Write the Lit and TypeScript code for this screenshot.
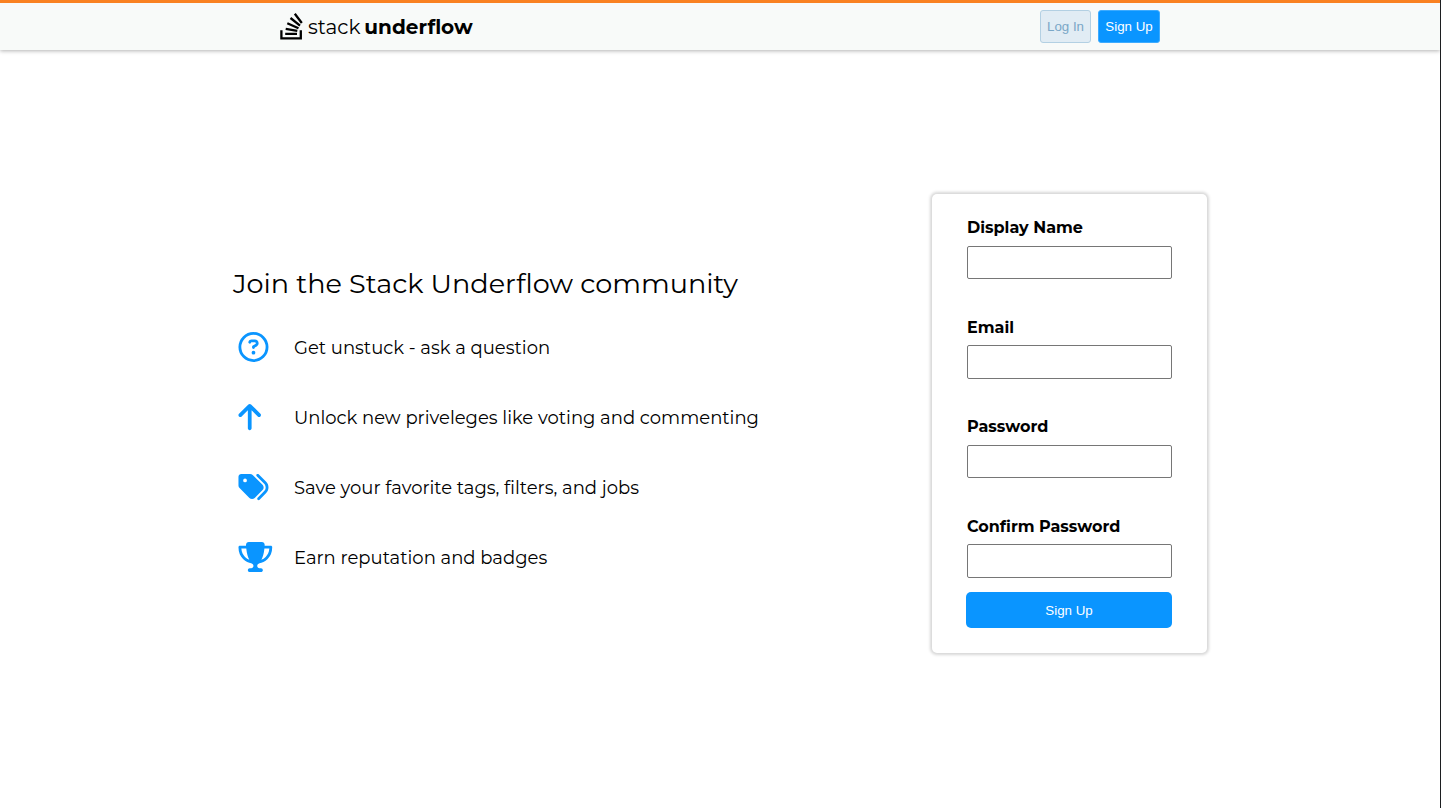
import { LitElement, html, css, svg } from "lit";
import { customElement } from "lit/decorators.js";

const BENEFITS = [
  {
    text: "Get unstuck - ask a question",
    w: 512,
    path: "M464 256A208 208 0 1 0 48 256a208 208 0 1 0 416 0zM0 256a256 256 0 1 1 512 0A256 256 0 1 1 0 256zm169.8-90.7c7.9-22.3 29.1-37.3 52.8-37.3h58.3c34.9 0 63.1 28.3 63.1 63.1c0 22.6-12.1 43.5-31.7 54.8L280 264.4c-.2 13-10.9 23.6-24 23.6c-13.3 0-24-10.7-24-24V250.5c0-8.6 4.6-16.5 12.1-20.8l44.3-25.4c4.7-2.7 7.6-7.7 7.6-13.1c0-8.4-6.8-15.1-15.1-15.1H222.6c-3.4 0-6.4 2.1-7.5 5.3l-.4 1.2c-4.4 12.5-18.2 19-30.6 14.6s-19-18.2-14.6-30.6l.4-1.2zM224 352a32 32 0 1 1 64 0 32 32 0 1 1 -64 0z",
  },
  {
    text: "Unlock new priveleges like voting and commenting",
    w: 384,
    path: "M214.6 41.4c-12.5-12.5-32.8-12.5-45.3 0l-160 160c-12.5 12.5-12.5 32.8 0 45.3s32.8 12.5 45.3 0L160 141.2V448c0 17.7 14.3 32 32 32s32-14.3 32-32V141.2L329.4 246.6c12.5 12.5 32.8 12.5 45.3 0s12.5-32.8 0-45.3l-160-160z",
  },
  {
    text: "Save your favorite tags, filters, and jobs",
    w: 512,
    path: "M345 39.1L472.8 168.4c52.4 53 52.4 138.2 0 191.2L360.8 472.9c-9.3 9.4-24.5 9.5-33.9 .2s-9.5-24.5-.2-33.9L438.6 325.9c33.9-34.3 33.9-89.4 0-123.7L310.9 72.9c-9.3-9.4-9.2-24.6 .2-33.9s24.6-9.2 33.9 .2zM0 229.5V80C0 53.5 21.5 32 48 32H197.5c17 0 33.3 6.7 45.3 18.7l168 168c25 25 25 65.5 0 90.5L277.3 442.7c-25 25-65.5 25-90.5 0l-168-168C6.7 262.7 0 246.5 0 229.5zM144 144a32 32 0 1 0 -64 0 32 32 0 1 0 64 0z",
  },
  {
    text: "Earn reputation and badges",
    w: 576,
    path: "M400 0H176c-26.5 0-48.1 21.8-47.1 48.2c.2 5.3 .4 10.6 .7 15.8H24C10.7 64 0 74.7 0 88c0 92.6 33.5 157 78.5 200.7c44.3 43.1 98.3 64.8 138.1 75.8c23.4 6.5 39.4 26 39.4 45.6c0 20.9-17 37.9-37.9 37.9H192c-17.7 0-32 14.3-32 32s14.3 32 32 32H384c17.7 0 32-14.3 32-32s-14.3-32-32-32H357.9C337 448 320 431 320 410.1c0-19.6 15.9-39.2 39.4-45.6c39.9-11 93.9-32.7 138.2-75.8C542.5 245 576 180.6 576 88c0-13.3-10.7-24-24-24H446.4c.3-5.2 .5-10.4 .7-15.8C448.1 21.8 426.5 0 400 0zM48.9 112h84.4c9.1 90.1 29.2 150.3 51.9 190.6c-24.9-11-50.8-26.5-73.2-48.3c-32-31.1-58-76-63-142.3zM464.1 254.3c-22.4 21.8-48.3 37.3-73.2 48.3c22.7-40.3 42.8-100.5 51.9-190.6h84.4c-5.1 66.3-31.1 111.2-63 142.3z",
  },
];

const FIELDS = [
  { id: "name", label: "Display Name", type: "text" },
  { id: "email", label: "Email", type: "email" },
  { id: "password", label: "Password", type: "password" },
  { id: "confirm", label: "Confirm Password", type: "password" },
];

@customElement("app-root")
export class AppRoot extends LitElement {
  static styles = css`
    :host {
      display: flex;
      flex-direction: column;
      box-sizing: border-box;
      height: 100vh;
      overflow: hidden;
      background: #fff;
      border-right: 1px solid #1c1e20;
      color: #000;
      font-family: Montserrat, Inter, sans-serif;
    }
    * { box-sizing: border-box; }
    header {
      flex: none;
      height: 50px;
      border-top: 3px solid #f98122;
      background: #f8faf9;
      box-shadow: 0 1px 4px rgba(0, 0, 0, 0.3);
      display: flex;
      justify-content: space-between;
      padding: 0 280px;
    }
    .logo { display: flex; align-items: center; height: 47px; white-space: nowrap; }
    .logo svg { width: 23px; height: 27px; margin-right: 5px; }
    .word { font-size: 20px; line-height: 24px; }
    .stack { margin-right: 4px; }
    .under { font-weight: 700; }
    .actions { display: flex; gap: 7px; padding-top: 7px; }
    button {
      font-family: "Liberation Sans", Arial, sans-serif;
      font-size: 13.33px;
      padding: 0;
      border-radius: 3px;
      white-space: nowrap;
    }
    .login { width: 51px; height: 33px; background: #e1ecf4; border: 1px solid #b3d0e3; color: #7aa7c7; }
    .join { width: 62px; height: 33px; background: #0a95ff; border: 1px solid #3dabff; color: #fff; }
    main { flex: 1; display: flex; align-items: flex-start; justify-content: space-between; padding: 144px 233px 0; }
    .pitch { padding-top: 72px; }
    h1 { margin: 0; font-size: 27.1px; line-height: 36px; font-weight: 400; white-space: nowrap; }
    ul { list-style: none; margin: 10px 0 0; padding: 0 0 0 5.4px; }
    li { display: flex; align-items: center; height: 70px; font-size: 18px; white-space: nowrap; }
    .benefit { padding-top: 2px; }
    .ico { width: 55.6px; height: 30px; display: flex; }
    .ico svg { height: 30px; fill: #0a95ff; display: block; overflow: visible; }
    .ico path { transform: translateX(8px); }
    form {
      width: 275px;
      height: 459px;
      border-radius: 5px;
      box-shadow: 0 0 3px 2px rgba(0, 0, 0, 0.16);
      padding: 22px 34px 0 35px;
      display: flex;
      flex-direction: column;
    }
    .field { height: 99.5px; flex: none; display: flex; flex-direction: column; }
    label { font-size: 16px; line-height: 24px; font-weight: 700; height: 29.5px; white-space: nowrap; }
    input { width: 205px; height: 33.5px; border: 1px solid #767676; border-radius: 2px; background: #fff; padding: 0 8px; outline: none; }
    .submit { width: 206px; height: 36px; flex: none; margin: -22px 0 0 -1px; background: #0a95ff; border: 0; border-radius: 5px; color: #fff; padding: 0; }
  `;

  render() {
    return html`
      <header>
        <div class="logo">
          <svg viewBox="0 0 23 27" fill="none" stroke="#000" stroke-width="2.3">
            <path d="M1.4 17.3V25.4H20.8V17.3M5.2 20.8H17M5.7 15.8L17.3 17.8M7.3 10.2L18.5 15.2M10.5 5L20 12.6M14.8 .8L21.8 10" />
          </svg>
          <span class="word stack">stack</span><span class="word under">underflow</span>
        </div>
        <div class="actions">
          <button class="login">Log In</button>
          <button class="join">Sign Up</button>
        </div>
      </header>
      <main>
        <section class="pitch">
          <h1>Join the Stack Underflow community</h1>
          <ul>
            ${BENEFITS.map(
              (b) => html`<li>
                <span class="ico"><svg viewBox="0 0 ${b.w} 512">${svg`<path d=${b.path} />`}</svg></span>
                <span class="benefit">${b.text}</span>
              </li>`
            )}
          </ul>
        </section>
        <form>
          ${FIELDS.map(
            (f) => html`<div class="field">
              <label for=${f.id}>${f.label}</label>
              <input id=${f.id} type=${f.type} />
            </div>`
          )}
          <button class="submit" type="button">Sign Up</button>
        </form>
      </main>
    `;
  }
}
